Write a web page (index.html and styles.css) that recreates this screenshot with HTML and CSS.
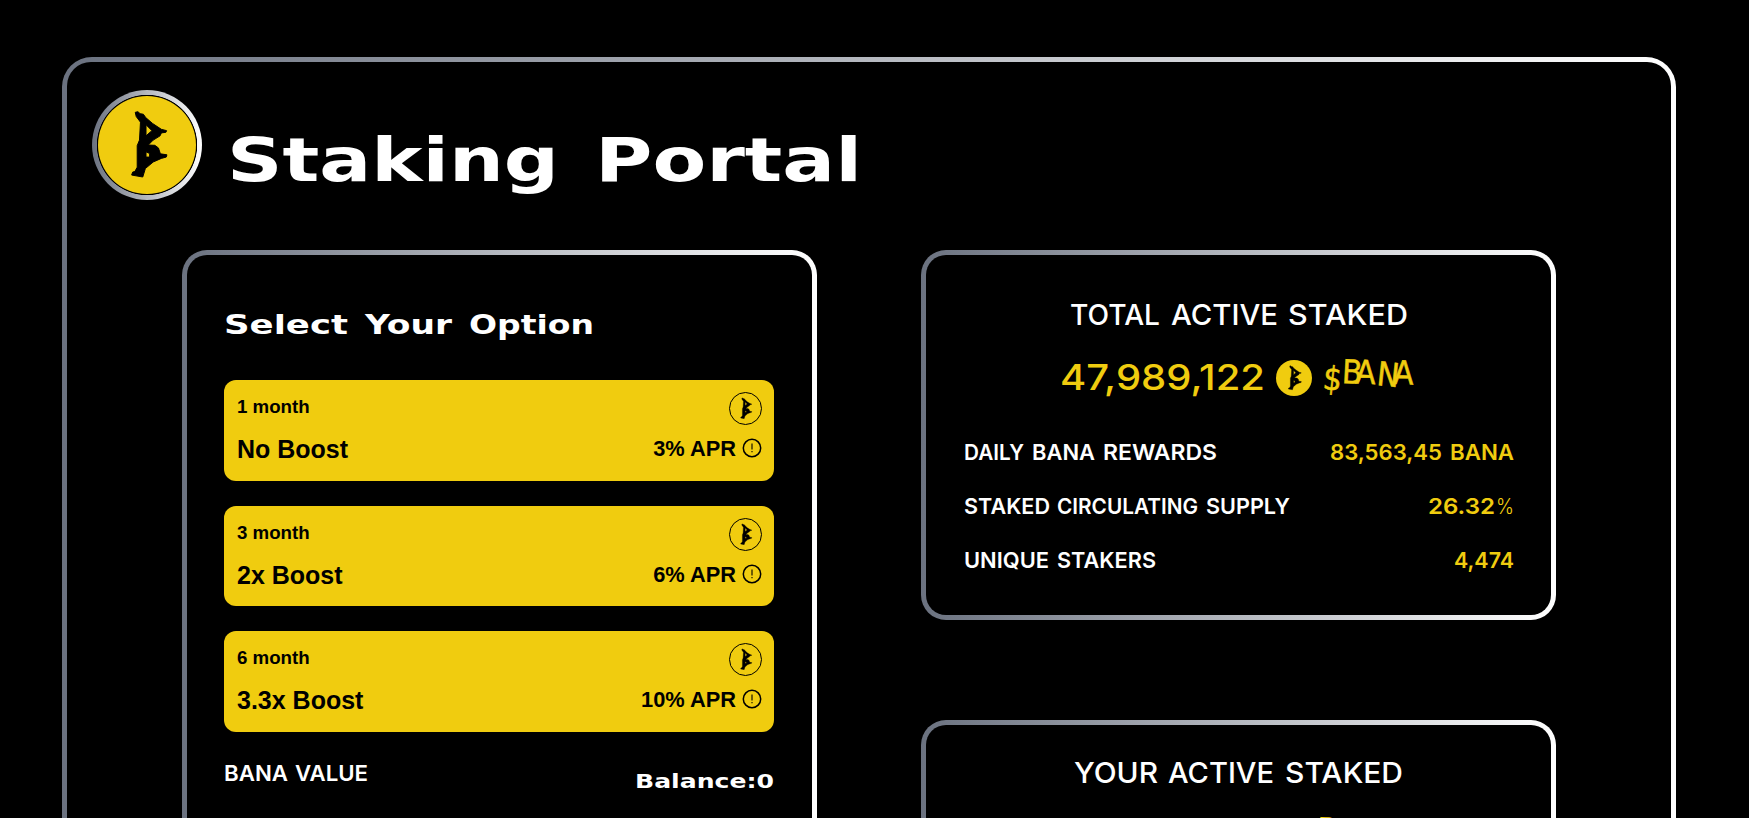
FILE: index.html
```html
<!DOCTYPE html>
<html lang="en">
<head>
<meta charset="utf-8">
<title>Staking Portal</title>
<link rel="stylesheet" href="styles.css">
</head>
<body>
<svg class="defs" width="0" height="0">
  <symbol id="mark" viewBox="21 30 300 300">
    <path fill-rule="evenodd" stroke="#000" stroke-width="3" stroke-linejoin="round" d="M135 80L143 78L150 84L160 86L167 96L188 114L215 132L231 136L229 141L215 143L211 152L190 165L175 180L195 181L206 189L212 207L232 210L230 217L215 221L190 232L166 252L158 278L124 272L127 263L134 261L141 248L141 182L148 165L151 110L138 93ZM168 118L186 136L168 152ZM168 201L179 206L179 217L168 217Z"/>
  </symbol>
  <symbol id="info" viewBox="0 0 20 20">
    <circle cx="10" cy="10" r="8.7" fill="none" stroke="#000" stroke-width="1.5"/>
    <path d="M10 5.5V11.5M10 13V14.2" stroke="#000" stroke-width="1.1"/>
  </symbol>
</svg>
<main class="frame"><div class="frame-inner">
  <header class="header">
    <div class="logo"><svg><use href="#mark"/></svg></div>
    <svg class="title wide" width="630" height="72">
      <text x="-3" y="51" textLength="332" lengthAdjust="spacingAndGlyphs">Staking</text>
      <text x="365" y="51" textLength="267" lengthAdjust="spacingAndGlyphs">Portal</text>
    </svg>
  </header>
  <div class="columns">
    <section class="card tall"><div class="card-inner options">
      <svg class="subtitle wide" width="370" height="32">
        <text x="0" y="21" textLength="124" lengthAdjust="spacingAndGlyphs">Select</text>
        <text x="141" y="21" textLength="87" lengthAdjust="spacingAndGlyphs">Your</text>
        <text x="245" y="21" textLength="125" lengthAdjust="spacingAndGlyphs">Option</text>
      </svg>
      <div class="option-list">
        <div class="option">
          <div class="line"><span class="term">1 month</span><svg class="badge"><use href="#mark"/></svg></div>
          <div class="line"><span class="boost">No Boost</span><span class="apr">3% APR<svg class="info"><use href="#info"/></svg></span></div>
        </div>
        <div class="option">
          <div class="line"><span class="term">3 month</span><svg class="badge"><use href="#mark"/></svg></div>
          <div class="line"><span class="boost">2x Boost</span><span class="apr">6% APR<svg class="info"><use href="#info"/></svg></span></div>
        </div>
        <div class="option">
          <div class="line"><span class="term">6 month</span><svg class="badge"><use href="#mark"/></svg></div>
          <div class="line"><span class="boost">3.3x Boost</span><span class="apr">10% APR<svg class="info"><use href="#info"/></svg></span></div>
        </div>
      </div>
      <div class="balance-row">
        <svg class="tech small" width="146" height="20">
          <text x="0" y="17" textLength="64" lengthAdjust="spacingAndGlyphs">BANA</text>
          <text x="71" y="17" textLength="73" lengthAdjust="spacingAndGlyphs">VALUE</text>
        </svg>
        <svg class="balance wide" width="139" height="20">
          <text x="0" y="15.5" textLength="139" lengthAdjust="spacingAndGlyphs">Balance:0</text>
        </svg>
      </div>
    </div></section>
    <div class="side">
      <section class="card total"><div class="card-inner stats">
        <svg class="tech heading" width="336" height="28">
          <text x="-1" y="24" textLength="90" lengthAdjust="spacingAndGlyphs">TOTAL</text>
          <text x="100" y="24" textLength="107" lengthAdjust="spacingAndGlyphs">ACTIVE</text>
          <text x="217" y="24" textLength="120" lengthAdjust="spacingAndGlyphs">STAKED</text>
        </svg>
        <div class="amount">
          <svg class="tech number" width="204" height="40">
            <text x="0" y="32" textLength="205" lengthAdjust="spacingAndGlyphs">47,989,122</text>
          </svg>
          <svg class="coin"><use href="#mark"/></svg>
          <svg class="scrawl" width="96" height="42">
            <text x="0 19.5 33 54 71" y="31 25 25.5 27 26" rotate="6 3 2 6 2">$BANA</text>
          </svg>
        </div>
        <div class="stat">
          <svg class="tech small" width="254" height="24">
            <text x="0" y="20" textLength="60" lengthAdjust="spacingAndGlyphs">DAILY</text>
            <text x="68" y="20" textLength="63" lengthAdjust="spacingAndGlyphs">BANA</text>
            <text x="139" y="20" textLength="114" lengthAdjust="spacingAndGlyphs">REWARDS</text>
          </svg>
          <svg class="tech small gold" width="184" height="24">
            <text x="0" y="20" textLength="112" lengthAdjust="spacingAndGlyphs">83,563,45</text>
            <text x="120" y="20" textLength="64" lengthAdjust="spacingAndGlyphs">BANA</text>
          </svg>
        </div>
        <div class="stat">
          <svg class="tech small" width="327" height="24">
            <text x="0" y="20" textLength="86" lengthAdjust="spacingAndGlyphs">STAKED</text>
            <text x="93" y="20" textLength="141" lengthAdjust="spacingAndGlyphs">CIRCULATING</text>
            <text x="242" y="20" textLength="84" lengthAdjust="spacingAndGlyphs">SUPPLY</text>
          </svg>
          <svg class="tech small gold" width="86" height="24">
            <text x="0" y="20" textLength="67" lengthAdjust="spacingAndGlyphs">26.32</text>
            <text class="light" x="68" y="20" textLength="18" lengthAdjust="spacingAndGlyphs">%</text>
          </svg>
        </div>
        <div class="stat">
          <svg class="tech small" width="193" height="24">
            <text x="0" y="20" textLength="85" lengthAdjust="spacingAndGlyphs">UNIQUE</text>
            <text x="93" y="20" textLength="99" lengthAdjust="spacingAndGlyphs">STAKERS</text>
          </svg>
          <svg class="tech small gold" width="60" height="24">
            <text x="0" y="20" textLength="60" lengthAdjust="spacingAndGlyphs">4,474</text>
          </svg>
        </div>
      </div></section>
      <section class="card own"><div class="card-inner stats">
        <svg class="tech heading" width="328" height="28">
          <text x="-1" y="24" textLength="84" lengthAdjust="spacingAndGlyphs">YOUR</text>
          <text x="93" y="24" textLength="106" lengthAdjust="spacingAndGlyphs">ACTIVE</text>
          <text x="210" y="24" textLength="118" lengthAdjust="spacingAndGlyphs">STAKED</text>
        </svg>
        <div class="amount">
          <svg class="coin"><use href="#mark"/></svg>
          <svg class="scrawl" width="96" height="42">
            <text x="0 19.5 33 54 71" y="31 25 27 29 28" rotate="6 3 2 6 2">$BANA</text>
          </svg>
        </div>
      </div></section>
    </div>
  </div>
</div></main>
</body>
</html>
```
FILE: styles.css
```css
* { box-sizing: border-box; }
html, body { height: 818px; overflow: hidden; }
body {
  margin: 0;
  padding: 57px 73px 0 62px;
  background: #000;
  color: #fff;
  font-family: "Liberation Sans", Arial, sans-serif;
}
svg { display: block; flex: none; overflow: visible; }
.defs { position: absolute; }

.frame {
  height: 761px;
  padding: 5px 5px 0;
  border-radius: 30px 30px 0 0;
  background: linear-gradient(90deg, #6b7280, #fff);
  overflow: hidden;
}
.frame-inner {
  height: 100%;
  border-radius: 24px 24px 0 0;
  background: #000;
  padding: 28px 25px 0;
}

.header { display: flex; align-items: flex-start; gap: 28px; height: 160px; }
.logo {
  width: 110px;
  height: 110px;
  padding: 6px;
  border-radius: 50%;
  background: radial-gradient(circle, #000 49.8px, transparent 50.5px), linear-gradient(90deg, #6b7280, #fff);
}
.logo svg { width: 98px; height: 98px; border-radius: 50%; background: #f0cc0f; }
.title { margin-top: 40px; font-size: 60px; }

.wide { font-family: "DejaVu Sans", sans-serif; font-weight: 700; fill: #fff; }
.tech { font-family: Inter, sans-serif; font-weight: 600; fill: #fff; }
.subtitle { font-size: 27px; }
.balance { font-size: 20px; }
.small { font-size: 22px; }
.heading { font-size: 29px; font-weight: 550; }
.number { font-size: 35.5px; fill: #f0cc0f; font-weight: 550; }
.gold { fill: #f0cc0f; }
.light { font-weight: 300; }

.columns { display: flex; gap: 104px; padding-left: 90px; }
.card {
  width: 635px;
  padding: 5px;
  border-radius: 25px;
  background: linear-gradient(90deg, #6b7280, #fff);
}
.card-inner { height: 100%; border-radius: 20px; background: #000; }
.tall, .own { padding-bottom: 0; border-radius: 25px 25px 0 0; }
.tall .card-inner, .own .card-inner { border-radius: 20px 20px 0 0; }
.tall { height: 568px; }
.side { display: flex; flex-direction: column; gap: 100px; }
.total { height: 370px; }
.own { height: 98px; overflow: hidden; }

.options { padding: 58px 38px 0 37px; }
.option-list { display: flex; flex-direction: column; gap: 25px; margin-top: 35px; }
.option {
  height: 100.6px;
  padding: 12px 12px 0 13px;
  border-radius: 12px;
  background: #f0cc0f;
  color: #000;
  font-weight: 700;
}
.line { display: flex; justify-content: space-between; height: 38px; }
.term { padding-top: 5px; font-size: 18.7px; line-height: 20px; }
.boost { padding-top: 5px; font-size: 25px; line-height: 28px; }
.apr { display: flex; gap: 6px; padding-top: 7px; font-size: 21.8px; line-height: 24px; }
.badge { width: 33px; height: 33px; border: 1px solid #000; border-radius: 50%; }
.info { width: 20px; height: 20px; margin-top: 1px; }
.balance-row { display: flex; justify-content: space-between; align-items: flex-start; padding: 32px 0 0; }
.balance-row .balance { margin-top: 8px; }

.stats { padding: 46px 37px 0 38px; }
.stats .heading { margin: 0 auto; }
.amount { display: flex; align-items: flex-start; justify-content: center; height: 82px; padding-top: 29px; }
.amount .coin { width: 36px; height: 36px; margin: 1.5px 10px 0 12px; border-radius: 50%; background: #f0cc0f; }
.scrawl {
  fill: #f0cc0f;
  stroke: #f0cc0f;
  stroke-width: 0.5px;
  font-family: "DejaVu Sans", sans-serif;
  font-size: 33px;
  font-stretch: condensed;
}
.stat { display: flex; justify-content: space-between; height: 54px; padding-top: 29px; }

.own .stats { padding-top: 34px; }
.own .amount { justify-content: flex-start; padding: 29px 0 0 275px; }
```
